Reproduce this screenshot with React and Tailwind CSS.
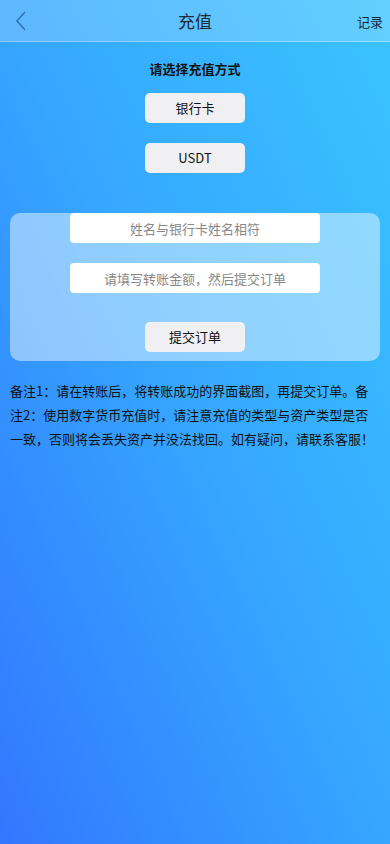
import React, { useState } from 'react';

const font = { fontFamily: '"Noto Sans CJK SC", "Noto Sans", sans-serif' };

const App = () => {
  const [method, setMethod] = useState('bank');
  const [name, setName] = useState('');
  const [amount, setAmount] = useState('');

  return (
    <div
      className="min-h-[844px] w-full bg-gradient-to-bl from-[#3ac4ff] via-[#36a6ff] to-[#3476ff] text-[#111]"
      style={font}
    >
      {/* header */}
      <div className="relative flex h-[42px] items-center justify-center border-b border-white/30 bg-white/20">
        <button className="absolute left-[12px] top-[9px] text-[#2a6fa8]">
          <svg width="18" height="24" viewBox="0 0 18 24" fill="none">
            <path d="M13 3 L5 12 L13 21" stroke="currentColor" strokeWidth="1.4" />
          </svg>
        </button>
        <h1 className="text-[17px] text-[#1a2a3a]">充值</h1>
        <span className="absolute right-[7px] top-[12px] text-[13px] text-[#1a2a3a]">记录</span>
      </div>

      {/* method */}
      <div className="flex flex-col items-center pt-[17px]">
        <p className="text-[13px] font-bold leading-[20px]">请选择充值方式</p>
        <button
          onClick={() => setMethod('bank')}
          className="mt-[14px] h-[30px] w-[100px] rounded-[5px] bg-[#f0f0f2] text-[13px]"
        >
          银行卡
        </button>
        <button
          onClick={() => setMethod('usdt')}
          className="mt-[20px] h-[30px] w-[100px] rounded-[5px] bg-[#f0f0f2] text-[13px]"
        >
          USDT
        </button>
      </div>

      {/* form card */}
      <div className="mx-[10px] mt-[40px] flex h-[148px] flex-col items-center rounded-[10px] bg-white/45">
        <input
          value={name}
          onChange={(e) => setName(e.target.value)}
          placeholder={method === 'bank' ? '姓名与银行卡姓名相符' : '姓名与银行卡姓名相符'}
          className="h-[30px] w-[250px] rounded-[4px] bg-white text-center text-[13px] outline-none placeholder:text-[#888]"
        />
        <input
          value={amount}
          onChange={(e) => setAmount(e.target.value)}
          placeholder="请填写转账金额，然后提交订单"
          className="mt-[20px] h-[30px] w-[250px] rounded-[4px] bg-white text-center text-[13px] outline-none placeholder:text-[#888]"
        />
        <button className="mt-[29px] h-[30px] w-[100px] rounded-[5px] bg-[#f0f0f2] text-[13px]">
          提交订单
        </button>
      </div>

      {/* notes */}
      <p className="px-[10px] pt-[18px] text-[13px] leading-[24px] text-[#111]">
        备注1：请在转账后，将转账成功的界面截图，再提交订单。备注2：使用数字货币充值时，请注意充值的类型与资产类型是否一致，否则将会丢失资产并没法找回。如有疑问，请联系客服！
      </p>
    </div>
  );
};

export default App;
